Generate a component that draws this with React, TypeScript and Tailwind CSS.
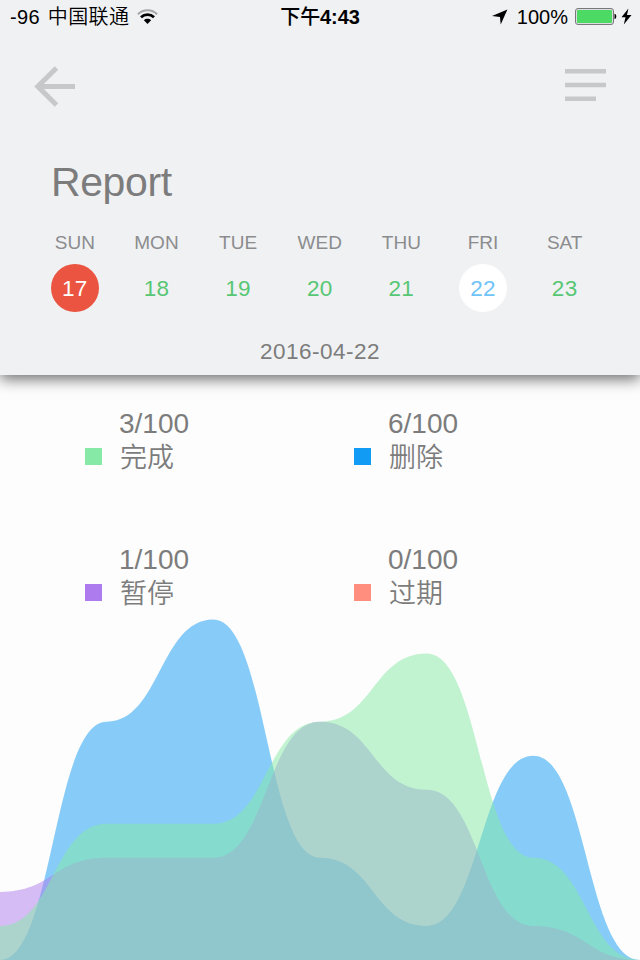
import { clsx } from "clsx";

const days = [
  { name: "SUN", date: 17, state: "today" },
  { name: "MON", date: 18 },
  { name: "TUE", date: 19 },
  { name: "WED", date: 20 },
  { name: "THU", date: 21 },
  { name: "FRI", date: 22, state: "selected" },
  { name: "SAT", date: 23 },
];

const stats = [
  { label: "完成", value: "3/100", color: "bg-[#86e9a5]" },
  { label: "删除", value: "6/100", color: "bg-[#129bf4]" },
  { label: "暂停", value: "1/100", color: "bg-[#ad7bee]" },
  { label: "过期", value: "0/100", color: "bg-[#ff8e7e]" },
];

// Drawn back to front
const series = [
  { id: "deleted", fill: "#129bf4", points: [0, 7, 10, 3, 1, 6, 0] },
  { id: "paused", fill: "#ad7bee", points: [2, 3, 3, 7, 5, 1, 0] },
  { id: "done", fill: "#86e9a5", points: [1, 4, 4, 7, 9, 3, 0] },
];

const CHART_W = 640;
const CHART_H = 341;
const UNIT = 34.05;

function areaPath(points: number[]) {
  const step = CHART_W / (points.length - 1);
  const y = (v: number) => CHART_H - v * UNIT;
  let d = `M0 ${CHART_H} L0 ${y(points[0])}`;
  for (let i = 1; i < points.length; i++) {
    const mid = (i - 0.5) * step;
    d += ` C${mid} ${y(points[i - 1])} ${mid} ${y(points[i])} ${i * step} ${y(points[i])}`;
  }
  return d + ` L${CHART_W} ${CHART_H} Z`;
}

function StatusBar() {
  return (
    <div className="grid h-8 grid-cols-[1fr_auto_1fr] items-center pl-[10px] pr-2 text-[20px] leading-8 text-black">
      <div className="flex items-center">
        <span className="tracking-[0.3px]">-96</span>
        <span className="ml-[8px] pt-px font-[350] tracking-[0.4px]">中国联通</span>
        <svg className="ml-[8px]" width="21" height="16" viewBox="0 0 21 16" fill="none">
          <path d="M.9 5.200C6.200-.1 14.800-.1 20.100 5.200" stroke="#a6a7a9" strokeWidth="2.200" />
          <path d="M4 8.300C7.700 4.800 13.300 4.800 17 8.300" stroke="#000" strokeWidth="2.800" />
          <path d="M6.900 11.200c2.100-1.900 5.100-1.900 7.200 0L10.500 14.900z" fill="#000" />
        </svg>
      </div>
      <span className="pr-[2px] pt-px text-[20px] font-bold tracking-[-0.1px]">
        <span className="font-medium">下午</span>4:43
      </span>
      <div className="flex items-center justify-end">
        <svg width="16" height="16" viewBox="0 0 16 16">
          <path d="M15.400.4 0 7l8 .9.700 7.700z" />
        </svg>
        <span className="ml-[9px] mr-[7px]">100%</span>
        <svg width="42" height="17" viewBox="0 0 42 17">
          <rect x=".5" y=".5" width="38" height="16" rx="2.5" fill="#dcdde0" stroke="#77787a" />
          <rect x="2" y="2" width="35" height="13" rx="1" fill="#4cd964" />
          <path d="M39.500 5.800c2.400.5 2.400 4.900 0 5.400z" />
        </svg>
        <svg className="ml-[4px]" width="11" height="17" viewBox="0 0 11 17">
          <path d="M7.400.5 0.500 9.300H4.500L2.800 16.500 10.500 7H6z" />
        </svg>
      </div>
    </div>
  );
}

export default function App() {
  return (
    <div className="flex h-[960px] w-[640px] flex-col overflow-hidden bg-[#fdfdfd] font-['Liberation_Sans','Noto_Sans_CJK_SC',sans-serif] text-[#7c7c7c]">
      <header className="relative h-[375px] shrink-0 bg-[#f0f1f3] shadow-[0_4px_14px_0_rgba(0,0,0,0.58)]">
        <StatusBar />

        <div className="flex items-center justify-between px-[34px] pt-[34px]">
          <button aria-label="Back">
            <svg className="block" width="42" height="42" viewBox="0 0 42 42" fill="none" stroke="#c7c8ca" strokeWidth="5">
              <path d="M22.500 2 3.800 20.500 22.500 39M4 20.500H41" />
            </svg>
          </button>
          <button aria-label="Menu" className="mb-[4px]">
            <svg className="block" width="41" height="32" viewBox="0 0 41 32" fill="#c7c8ca">
              <path d="M0 0h41v4.500H0zM0 13.700h41v4.500H0zM0 27.400h31v4.500H0z" />
            </svg>
          </button>
        </div>

        <h1 className="mt-[50px] pl-[51px] text-[41px] leading-[48px] tracking-[-0.4px]">Report</h1>

        <div className="ml-[34px] mt-[25px] grid w-[571.5px] grid-cols-7">
          {days.map((day) => (
            <div key={day.name} className="flex flex-col items-center">
              <span className="text-[19px] leading-6 text-[#8b8c8e]">{day.name}</span>
              <span
                className={clsx(
                  "mt-[9px] flex size-[48px] items-center justify-center rounded-full pt-px text-[22.5px] tracking-[0.3px]",
                  day.state === "today" && "bg-[#ea5440] text-white",
                  day.state === "selected" && "bg-white text-[#6fc3f8]",
                  !day.state && "text-[#57c774]"
                )}
              >
                {day.date}
              </span>
            </div>
          ))}
        </div>

        <p className="mt-[26px] text-center text-[22.5px] leading-7 tracking-[0.5px]">2016-04-22</p>
      </header>

      <section className="ml-[85px] mt-[32px] grid h-[212px] shrink-0 grid-cols-[269px_1fr] grid-rows-[136px_auto]">
        {stats.map((stat) => (
          <div key={stat.label} className="flex items-start">
            <span className={clsx("mt-[41px] size-[17px]", stat.color)} />
            <div className="ml-[17px] text-[28px] leading-[33px]">
              <p>{stat.value}</p>
              <p className="mt-[2px] pl-px text-[27px] font-[350]">{stat.label}</p>
            </div>
          </div>
        ))}
      </section>

      <svg className="block shrink-0" width={CHART_W} height={CHART_H} viewBox={`0 0 ${CHART_W} ${CHART_H}`}>
        {series.map((s) => (
          <path key={s.id} d={areaPath(s.points)} fill={s.fill} fillOpacity="0.5" />
        ))}
      </svg>
    </div>
  );
}
